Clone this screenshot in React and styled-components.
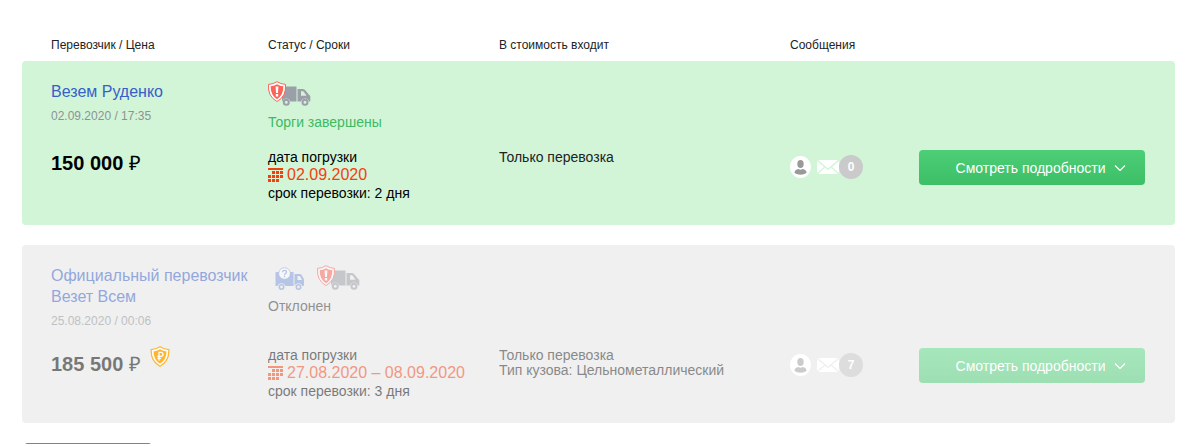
import React from 'react'
import styled, { createGlobalStyle } from 'styled-components'

const offers = [
  {
    id: 1,
    carrier: 'Везем Руденко',
    created: '02.09.2020 / 17:35',
    price: '150 000',
    status: 'Торги завершены',
    won: true,
    loading: '02.09.2020',
    duration: 'срок перевозки: 2 дня',
    includes: ['Только перевозка'],
    messages: 0,
  },
  {
    id: 2,
    carrier: 'Официальный перевозчик Везет Всем',
    created: '25.08.2020 / 00:06',
    price: '185 500',
    status: 'Отклонен',
    rejected: true,
    unverified: true,
    guarantee: true,
    loading: '27.08.2020 – 08.09.2020',
    duration: 'срок перевозки: 3 дня',
    includes: ['Только перевозка', 'Тип кузова: Цельнометаллический'],
    messages: 7,
  },
]

const InsuredTruck = () => (
  <svg width="43" height="26" viewBox="0 0 43 26" aria-hidden="true">
    <path fill="#9b9fa8" d="M14 5.500h14.500V20.500H22.300a4.200 4.200 0 0 0-8 0H14z" />
    <path fill="#9b9fa8" fillRule="evenodd" d="M29.500 8H35q1.500 0 2.500 1.500l3.500 4.300q1.300.5 1.300 2v4.700H41a4.200 4.200 0 0 0-8 0h-3.500zM33 10.300v4.400h5.500l-2.700-3.900q-.4-.5-1-.5z" />
    <g fill="none" stroke="#9b9fa8" strokeWidth="2">
      <circle cx="18.300" cy="21.300" r="2.500" />
      <circle cx="37" cy="21.300" r="2.500" />
    </g>
    <path fill="#fff" stroke="#fb6458" strokeWidth="1" d="M9 .7Q13 3.200 17.500 3.400Q18.500 15.500 9 20.500Q-.5 15.500 .5 3.400Q5 3.200 9 .7z" />
    <path fill="#fb6458" d="M9 3.200Q12 5 15.300 5.300Q15.600 14 9 18.300Q2.400 14 2.700 5.300Q6 5 9 3.200z" />
    <path fill="#fff" d="M7.600 5.500h2.800L10 12H8zM7.800 13h2.400v2.400H7.800z" />
  </svg>
)

const UnverifiedTruck = () => (
  <svg width="30" height="23" viewBox="0 0 30 23" aria-hidden="true">
    <path fill="#7d9cdc" d="M1 5h17.500v14H10.300a4 4 0 0 0-7.600 0H.5V6z" />
    <path fill="#7d9cdc" fillRule="evenodd" d="M19.500 7h5q1.500 0 2.300 1.300L29 12.500V18q0 1-1 1h-.7a4 4 0 0 0-7.600 0h-.2zM22.500 9v4h4.500l-1.800-3.500q-.3-.5-1-.5z" />
    <g fill="none" stroke="#7d9cdc" strokeWidth="1.600">
      <circle cx="6.500" cy="20" r="2.200" />
      <circle cx="23.500" cy="20" r="2.200" />
    </g>
    <circle cx="9.500" cy="6.500" r="5.800" fill="#fff" stroke="#7d9cdc" strokeWidth=".8" />
    <path fill="none" stroke="#7d9cdc" strokeWidth="1.300" d="M7.500 5.300q0-2 2-2t2 1.700q0 1-1.100 1.600T9.500 8M9.500 8.800v1.400" />
  </svg>
)

const CalendarIcon = () => (
  <svg width="15" height="14" viewBox="0 0 15 14" fill="#f2400f" aria-hidden="true">
    <path d="M0 0h15v2H0zM4 3h3v3H4zM8 3h3v3H8zM12 3h3v3h-3zM0 7h3v3H0zM4 7h3v3H4zM8 7h3v3H8zM12 7h3v3h-3zM0 11h3v3H0zM4 11h3v3H4zM8 11h3v3H8z" />
  </svg>
)

const GuaranteeShield = () => (
  <Shield width="20" height="21" viewBox="0 0 20 21" role="img" aria-label="₽">
    <path fill="#fff" stroke="#ffb52e" strokeWidth="1.200" d="M10 .8Q14 3.300 18.800 3.600Q19.500 15 10 20.200Q.5 15 1.200 3.600Q6 3.300 10 .8z" />
    <path fill="#ffb52e" d="M10 3.300Q13 5.100 16.500 5.400Q16.500 13.500 10 17.700Q3.500 13.500 3.500 5.400Q7 5.100 10 3.300z" />
    <path fill="none" stroke="#fff" strokeWidth="1.300" d="M9 14.500V6.300h2q2 0 2 2t-2 2H7.300M7.300 12.400h3.700" />
  </Shield>
)

const PersonIcon = () => (
  <svg width="21" height="22" viewBox="0 0 21 22" aria-hidden="true">
    <ellipse cx="10.500" cy="11" rx="10.500" ry="11" fill="#fff" />
    <Figure>
      <ellipse cx="10.500" cy="8" rx="3.200" ry="4" />
      <path d="M4.500 17q0-3.500 4-4 2 1.300 4 0 4 .5 4 4-2.500 1.700-6 1.700t-6-1.700z" />
    </Figure>
  </svg>
)

const MailIcon = () => (
  <svg width="22" height="14" viewBox="0 0 22 14" fill="#fff" aria-hidden="true">
    <path d="M1 0h20L11 8.500zM0 1l7 6-7 6zM22 1l-7 6 7 6zM8 7.800l3 2.400 3-2.400 7 6.200H1z" />
  </svg>
)

const Chevron = () => (
  <svg width="12" height="6" viewBox="0 0 12 6" fill="none" stroke="#fff" strokeWidth="1.200" aria-hidden="true">
    <path d="M1 .5l5 5 5-5" />
  </svg>
)

const Offer = ({ offer }) => (
  <OfferRow $rejected={offer.rejected}>
    <Cell>
      <CarrierLink href="#carrier">{offer.carrier}</CarrierLink>
      <Created>{offer.created}</Created>
      <Lower>
        <Price>
          <Amount><b>{offer.price}</b> ₽</Amount>
          {offer.guarantee && <GuaranteeShield />}
        </Price>
      </Lower>
    </Cell>
    <Cell>
      <Badges $indent={offer.unverified}>
        {offer.unverified && <UnverifiedTruck />}
        <InsuredTruck />
      </Badges>
      <Status $won={offer.won}>{offer.status}</Status>
      <Lower>
        <Term>дата погрузки</Term>
        <LoadingDate><CalendarIcon />{offer.loading}</LoadingDate>
        <Term>{offer.duration}</Term>
      </Lower>
    </Cell>
    <Cell>
      <Lower $offset>
        {offer.includes.map(item => <Included key={item}>{item}</Included>)}
      </Lower>
    </Cell>
    <Cell>
      <Lower $offset>
        <Messages>
          <PersonIcon />
          <MailIcon />
          <Counter>{offer.messages}</Counter>
        </Messages>
      </Lower>
    </Cell>
    <Cell>
      <Lower $offset>
        <DetailsButton type="button">
          Смотреть подробности
          <Chevron />
        </DetailsButton>
      </Lower>
    </Cell>
  </OfferRow>
)

const App = () => (
  <>
    <GlobalStyle />
    <Page>
      <OffersTable>
        <thead>
          <HeadRow>
            <HeadCell>Перевозчик / Цена</HeadCell>
            <HeadCell>Статус / Сроки</HeadCell>
            <HeadCell>В стоимость входит</HeadCell>
            <HeadCell>Сообщения</HeadCell>
            <HeadCell />
          </HeadRow>
        </thead>
        <tbody>
          {offers.map(offer => <Offer key={offer.id} offer={offer} />)}
        </tbody>
      </OffersTable>
      <FooterButton type="button" aria-label="Перевозчик" />
    </Page>
  </>
)

export default App

const GlobalStyle = createGlobalStyle`
  * {
    box-sizing: border-box;
  }

  html {
    scrollbar-width: none;
  }

  body {
    margin: 0;
    background: #fff;
    color: #000;
    font: 14px/18px "Liberation Sans", Arial, sans-serif;
  }

  svg {
    flex-shrink: 0;
  }
`;

const Page = styled.main`
  padding: 36px 25px 0 22px;
`;

const OffersTable = styled.table`
  display: block;

  thead, tbody {
    display: block;
  }
`;

const Row = styled.tr`
  display: grid;
  grid-template-columns: 217fr 231fr 291fr 129fr 226fr;
  padding: 0 30px 0 29px;
`;

const HeadRow = styled(Row)`
  padding-bottom: 7px;
`;

const HeadCell = styled.th`
  padding: 0;
  color: #222;
  font-size: 12px;
  font-weight: 400;
  text-align: left;
`;

const OfferRow = styled(Row)`
  --fade: ${props => props.$rejected ? 0.5 : 1};
  padding-top: 20px;
  padding-bottom: 23px;
  border-radius: 4px;
  background: ${props => props.$rejected ? '#f0f0f0' : '#d2f5d8'};

  & + & {
    margin-top: 20px;
  }
`;

const Cell = styled.td`
  display: flex;
  flex-direction: column;
  min-width: 0;
  padding: 0;
`;

const Lower = styled.div`
  min-height: 54px;
  margin-top: auto;
  padding-top: ${props => props.$offset ? '2px' : '0'};
`;

const CarrierLink = styled.a`
  color: #3660c9;
  font-size: 16px;
  line-height: 21px;
  text-decoration: none;
  opacity: var(--fade);
`;

const Created = styled.div`
  margin: 7px 0 17px;
  color: #8d9297;
  font-size: 12px;
  line-height: 15px;
  opacity: var(--fade);
`;

const Price = styled.div`
  font-size: 20px;
  line-height: 30px;
`;

const Amount = styled.span`
  opacity: var(--fade);
`;

const Shield = styled.svg`
  margin-left: 9px;
  vertical-align: 4px;
`;

const Badges = styled.div`
  display: flex;
  align-items: center;
  gap: 12px;
  height: 26px;
  padding-left: ${props => props.$indent ? '7px' : '0'};
  opacity: var(--fade);
`;

const Status = styled.div`
  margin: 6px 0 17px;
  color: ${props => props.$won ? '#3dba62' : '#333'};
  opacity: var(--fade);
`;

const Term = styled.div`
  opacity: var(--fade);
`;

const LoadingDate = styled.div`
  display: flex;
  align-items: center;
  gap: 4px;
  color: #f2400f;
  font-size: 16px;
  white-space: nowrap;
  opacity: var(--fade);
`;

const Included = styled.div`
  color: #222;
  line-height: 15px;
  opacity: var(--fade);
`;

const Messages = styled.div`
  display: flex;
  align-items: center;
  height: 33px;

  svg + svg {
    margin-left: 6px;
  }
`;

const Counter = styled.span`
  display: flex;
  align-items: center;
  justify-content: center;
  width: 24px;
  height: 24px;
  border-radius: 12px;
  background: rgba(202, 202, 202, var(--fade));
  color: #fff;
  font-size: 12px;
  font-weight: 700;
`;

const Figure = styled.g`
  fill: #999;
  opacity: var(--fade);
`;

const DetailsButton = styled.button`
  display: flex;
  align-items: center;
  justify-content: center;
  gap: 9px;
  width: 100%;
  height: 35px;
  padding: 0 0 0 18px;
  border: 0;
  border-radius: 4px;
  background: linear-gradient(rgba(77, 206, 119, var(--fade)), rgba(60, 191, 102, var(--fade))) #fff;
  color: #fff;
  font: inherit;
  white-space: nowrap;
  cursor: pointer;
`;

const FooterButton = styled.button`
  display: block;
  width: 128px;
  height: 35px;
  margin: 20px 0 0 2px;
  border: 0;
  border-radius: 4px;
  background: #5f86cd;
`;
